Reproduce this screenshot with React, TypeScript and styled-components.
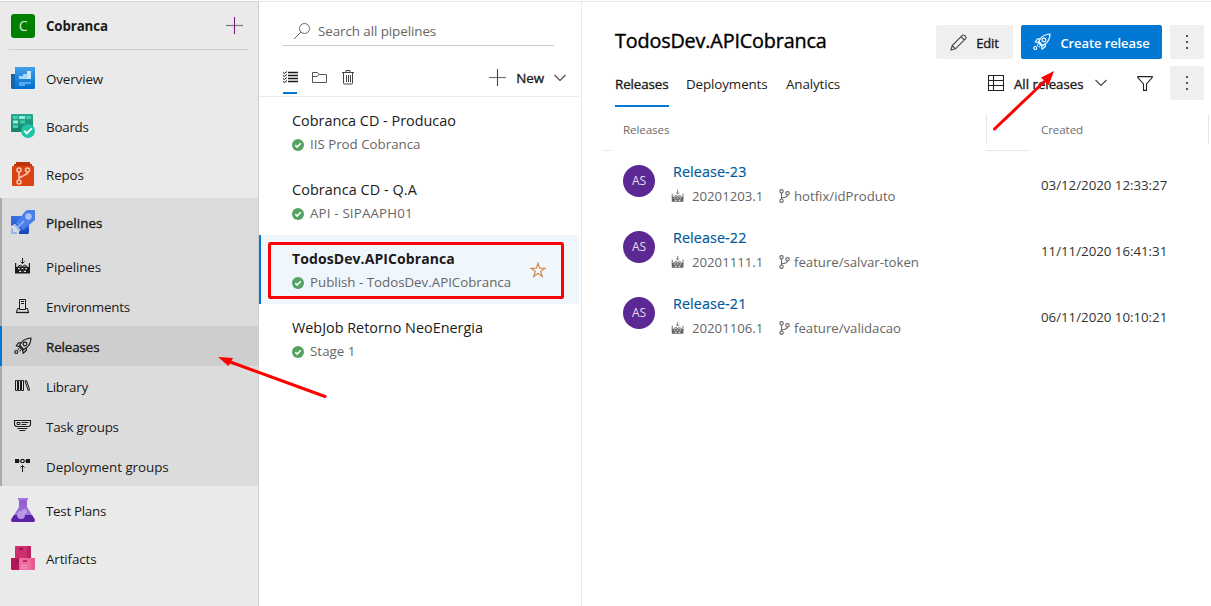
import React from "react";
import styled, { createGlobalStyle, css } from "styled-components";

const Global = createGlobalStyle`
  * { box-sizing: border-box; }
  body { margin: 0; background: #fff; overflow: hidden; }
  svg { display: block; flex: none; }
`;

const medium = css`-webkit-text-stroke: 0.35px currentColor;`;

const Page = styled.div`
  position: relative;
  display: flex;
  width: 1211px;
  height: 606px;
  padding-top: 1px;
  font-family: "Open Sans", "Noto Sans", sans-serif;
  font-size: 13.4px;
  letter-spacing: -0.1px;
  color: #1b1a19;
  white-space: nowrap;
`;

/* ---------- Sidebar ---------- */
const Sidebar = styled.nav`
  width: 259px;
  background: #eaeaea;
  border-top: 1px solid #d4d4d4;
  border-right: 1px solid #cfcfcf;
`;
const Project = styled.header`
  display: flex;
  align-items: center;
  height: 48px;
  margin: 0 10px 4px 9px;
  padding: 0 5px 0 2px;
  border-bottom: 1px solid #cdcdcd;
`;
const ProjectBadge = styled.span`
  width: 24px;
  height: 24px;
  margin-right: 11px;
  border-radius: 3px;
  background: #007f00;
  color: #d5ecd5;
  font-size: 14px;
  line-height: 24px;
  text-align: center;
`;
const ProjectName = styled.strong`
  flex: 1;
  font-size: 13.3px;
  line-height: 24px;
  letter-spacing: -0.12px;
`;
const NavItem = styled.a`
  display: flex;
  align-items: center;
  gap: 11px;
  height: 48px;
  padding-left: 11px;
`;
const NavLabel = styled.span<{ $strong?: boolean; $track?: number }>`
  padding-top: 1px;
  letter-spacing: ${(p) => p.$track ?? -0.12}px;
  ${(p) => p.$strong && medium}
`;
const NavSection = styled.div`
  background: #dcdcdc;
`;
const SectionHead = styled(NavItem)`
  padding-left: 9px;
  border-left: 2px solid #a9a9a9;
`;
const SubItem = styled.a<{ $active?: boolean }>`
  display: flex;
  align-items: center;
  gap: 14px;
  height: 40px;
  padding-left: 12px;
  border-left: 2px solid ${(p) => (p.$active ? "#0078d4" : "#a9a9a9")};
  background: ${(p) => (p.$active ? "#cecece" : "transparent")};
`;

/* ---------- Pipeline list ---------- */
const ListPane = styled.section`
  width: 323px;
  border-top: 1px solid #eaeaea;
  border-right: 1px solid #eaeaea;
`;
const Search = styled.div`
  display: flex;
  align-items: center;
  gap: 7px;
  width: 271px;
  height: 30px;
  margin: 14px 0 0 24px;
  padding-left: 10px;
  border-bottom: 1px solid #c8c8c8;
  color: #666;
  letter-spacing: -0.08px;
`;
const Toolbar = styled.div`
  display: flex;
  align-items: center;
  width: 320px;
  height: 51px;
  padding: 0 13px 0 24px;
  border-bottom: 1px solid #eaeaea;
`;
const ViewTab = styled.span<{ $active?: boolean }>`
  display: flex;
  align-items: center;
  height: 32px;
  width: ${(p) => (p.$active ? 14 : 15)}px;
  margin: 14px 15px 0 0;
  border-bottom: 2px solid ${(p) => (p.$active ? "#0078d4" : "transparent")};
`;
const NewButton = styled.span`
  display: flex;
  align-items: center;
  gap: 10px;
  margin: 13px 0 0 auto;
  ${medium}
`;
const PipelineRow = styled.div<{ $active?: boolean }>`
  display: flex;
  align-items: center;
  justify-content: space-between;
  width: 320px;
  height: 69px;
  padding: 0 33px 0 31px;
  border-left: 2px solid ${(p) => (p.$active ? "#0078d4" : "transparent")};
  background: ${(p) => (p.$active ? "#eff6fc" : "transparent")};
`;
const PipelineText = styled.div`
  padding-top: 2px;
`;
const PipelineName = styled.div<{ $active?: boolean; $track: number }>`
  font-size: ${(p) => (p.$active ? 14 : 14.4)}px;
  font-weight: ${(p) => (p.$active ? 700 : 400)};
  line-height: 24px;
  letter-spacing: ${(p) => p.$track}px;
`;
const StageLine = styled.div<{ $track: number }>`
  display: flex;
  align-items: center;
  gap: 6px;
  color: #666;
  font-size: 13.3px;
  line-height: 23px;
  letter-spacing: ${(p) => p.$track}px;
`;

/* ---------- Release panel ---------- */
const Main = styled.main`
  flex: 1;
  border-top: 1px solid #eaeaea;
`;
const TitleBar = styled.div`
  display: flex;
  align-items: center;
  height: 34px;
  margin: 23px 7px 0 33px;
  gap: 8px;
`;
const Title = styled.h1`
  flex: 1;
  margin: 0 0 2px;
  font-size: 19.8px;
  font-weight: 400;
  line-height: 28px;
  letter-spacing: -0.16px;
  color: #000;
  -webkit-text-stroke: 0.4px currentColor;
`;
const Button = styled.button<{ $primary?: boolean; $w: number }>`
  display: flex;
  align-items: center;
  justify-content: center;
  gap: 9px;
  width: ${(p) => p.$w}px;
  height: 34px;
  padding: 0;
  border: 0;
  border-radius: 2px;
  background: ${(p) => (p.$primary ? "#0078d4" : "#efefef")};
  color: ${(p) => (p.$primary ? "#fff" : "#1b1a19")};
  font: ${(p) => (p.$primary ? 600 : 400)} 13px "Open Sans", sans-serif;
  letter-spacing: ${(p) => (p.$primary ? -0.1 : -0.1)}px;
  ${(p) => !p.$primary && medium}
`;
const ButtonText = styled.span`
  padding-top: 2px;
`;
const TabBar = styled.div`
  display: flex;
  align-items: flex-start;
  height: 48px;
  margin: 7px 7px 0 33px;
`;
const Tab = styled.span<{ $active?: boolean; $w: number }>`
  width: ${(p) => p.$w}px;
  height: 41px;
  margin-right: 17px;
  line-height: 36px;
  letter-spacing: -0.12px;
  border-bottom: 2px solid ${(p) => (p.$active ? "#0078d4" : "transparent")};
  ${(p) => p.$active && medium}
`;
const TabTools = styled.div`
  display: flex;
  align-items: center;
  height: 34px;
  margin-left: auto;
`;
const FilterLabel = styled.span`
  width: 71px;
  margin: 2px 10px 0 10px;
  font-size: 13.2px;
  letter-spacing: 0.02px;
  ${medium}
`;
const FilterIcon = styled.span`
  margin: 0 17px 0 30px;
`;
const rule = "linear-gradient(#e6e6e6, #e6e6e6)";
const HeadRow = styled.div`
  display: flex;
  height: 37px;
  margin: 0 2px 0 21px;
  color: #6b6b6b;
  font-size: 11.6px;
  line-height: 32px;
`;
const ReleasesHead = styled.span`
  width: 383px;
  padding-left: 20px;
  background: ${rule} left bottom / 8px 1px no-repeat;
`;
const CreatedHead = styled.span`
  flex: 1;
  padding-left: 55px;
  background:
    ${rule} left top / 1px 30px no-repeat,
    ${rule} left bottom / 43px 1px no-repeat,
    ${rule} right top / 1px 30px no-repeat;
`;
const ReleaseRow = styled.div`
  display: grid;
  grid-template-columns: 32px 350px auto;
  column-gap: 18px;
  align-items: center;
  height: 66px;
  margin-left: 41px;
`;
const ReleaseList = styled.div`
  margin-top: -3px;
`;
const Avatar = styled.span`
  width: 32px;
  height: 32px;
  border-radius: 50%;
  background: #5c2893;
  color: #e7ddf0;
  font-size: 12px;
  line-height: 32px;
  text-align: center;
`;
const ReleaseName = styled.div`
  padding-top: 8px;
  color: #005a9e;
  font-size: 14.3px;
  line-height: 22px;
  letter-spacing: 0.12px;
  -webkit-text-stroke: 0.2px currentColor;
`;
const ReleaseMeta = styled.div`
  display: flex;
  align-items: center;
  height: 26px;
  margin-left: -2px;
  color: #666;
  font-size: 13.2px;
  letter-spacing: 0;
`;
const BuildNumber = styled.span`
  width: 87px;
  margin-left: 7px;
`;
const Branch = styled.span`
  margin-left: 4px;
  letter-spacing: -0.01px;
`;
const Created = styled.span`
  padding-top: 8px;
  color: #333;
  font-size: 13.3px;
  letter-spacing: -0.02px;
`;
const Annotations = styled.svg`
  position: absolute;
  inset: 0;
  pointer-events: none;
`;

/* ---------- Icons ---------- */
const OverviewIcon = () => (
  <svg width="24" height="24">
    <defs><linearGradient id="ov" x2="0" y2="1"><stop stopColor="#429fe8" /><stop offset="1" stopColor="#006fcd" /></linearGradient></defs>
    <path d="M0 8h5v15H1.500A1.500 1.500 0 0 1 0 21.500z" fill="#1565ae" />
    <path d="M4 1h20v20.500a1.500 1.500 0 0 1-1.500 1.500H3q1-.5 1-2z" fill="url(#ov)" />
    <path d="M8 10h4V8h4V5h4v8H8z" fill="#a9d6fa" /><path d="M16 5h4v8h-4z" fill="#c6e5fc" />
    <path d="M8 16h12v2H14v2H8z" fill="#55a9ec" />
  </svg>
);
const BoardsIcon = () => (
  <svg width="24" height="24">
    <defs><linearGradient id="bd" x2="0" y2="1"><stop stopColor="#2ba88f" /><stop offset="1" stopColor="#16806d" /></linearGradient></defs>
    <rect width="22" height="18" rx="1" fill="url(#bd)" />
    <path d="M2 2h5v3H2zM15 2h5v3h-5zM9 6.500h5v3H9zM2 11h5v3H2z" fill="#3fd0b0" />
    <path d="M8 2h6v3H8zM2 6.500h5v3H2z" fill="#92f3dc" />
    <circle cx="17" cy="17" r="7" fill="#1dc4a5" />
    <path d="m13.200 16.800 2.600 2.600 5-5" fill="none" stroke="#fff" strokeWidth="2" />
  </svg>
);
const ReposIcon = () => (
  <svg width="24" height="24">
    <path d="M5 0h14v2h2v3H3V2h2z" fill="#bd3508" />
    <rect x="1" y="4" width="22" height="20" rx="1" fill="#db4412" />
    <g fill="none" stroke="#f9c5ae" strokeWidth="1.600"><circle cx="8" cy="8" r="2" /><circle cx="16.500" cy="8" r="2" /><circle cx="8" cy="20" r="2" /><path d="M8 10v8M16.500 10v1.500L8 16" /></g>
  </svg>
);
const PipelinesIcon = () => (
  <svg width="24" height="24">
    <defs><linearGradient id="pp" x2="0" y2="1"><stop stopColor="#3b74e4" /><stop offset="1" stopColor="#1746b8" /></linearGradient></defs>
    <path d="M0 6h10l8 8v9l-1 1H8v-6l-4-4-4 2z" fill="url(#pp)" />
    <path d="M24 0v10L12 20l-7-7L14 1.500q1-1.500 3-1.500z" fill="#4b80ea" />
    <circle cx="17.500" cy="6.500" r="3.200" fill="#a9c4f8" />
    <path d="m13 11-6 6" stroke="#85a8f2" strokeWidth="1.800" />
    <path d="M0 18h2v4h4v2H0z" fill="#94b4f6" /><path d="m4 14 6 6-1.500 1.500-6-6z" fill="#a3bff8" />
  </svg>
);
const TestPlansIcon = () => (
  <svg width="24" height="24">
    <defs><linearGradient id="tp" x2="0" y2="1"><stop stopColor="#8f5bcf" /><stop offset="1" stopColor="#a57fdb" /></linearGradient></defs>
    <path d="M8 1h8v8l7.500 12q1 3-1.500 3H2q-2.500 0-1.500-3L8 9z" fill="url(#tp)" />
    <path d="M3 17h18l2.500 4q1 3-1.500 3H2q-2.500 0-1.500-3z" fill="#5c22a5" />
    <path d="M7 0h10v2H7z" fill="#a777df" />
    <circle cx="10" cy="17" r="4" fill="#b795e5" /><circle cx="13.500" cy="13.500" r="2.500" fill="#c3a5ec" opacity=".8" />
  </svg>
);
const ArtifactsIcon = () => (
  <svg width="24" height="24">
    <path d="M4 0h16v12H4z" fill="#cf2f6e" /><path d="M16 0h4v12h-4z" fill="#b82361" />
    <path d="M0 12h8v12H1l-1-1z" fill="#b3165a" /><path d="M8 12h16v11l-1 1H8z" fill="#ee6ba0" /><path d="M20 12h4v11l-1 1h-3z" fill="#e45a91" />
    <path d="M8 2h4v2H8zM4 14h4v2H4z" fill="#9b1450" /><path d="M12 14h4v2h-4z" fill="#c02767" /><path d="M10 19h6v1h-6zM10 21.500h6v1h-6z" fill="#f6a4c4" />
  </svg>
);
const BuildIcon = ({ size = 18, color = "#1b1a19" }) => (
  <svg width={size} height={size} viewBox="0 0 18 18">
    <g fill="none" stroke={color}><path d="M8.500 1v5.500M6.500 4.500l2 2 2-2" /><path d="M1.600 6v6M15.400 6v6" strokeWidth="1.200" /></g>
    <path fillRule="evenodd" fill={color} d="M1 10.500 4 9.500h9l3 1v6H1zM4 11v1.200h1.800V11zm3.600 0v1.200h1.800V11zm3.600 0v1.200H13V11zM5 13.800V15h2.300v-1.200zm4.700 0V15H12v-1.200z" />
    <path d="M4 9.500 6.300 8l2.200 1.500L10.800 8 13 9.500" fill="none" stroke={color} />
  </svg>
);
const EnvironmentIcon = () => (
  <svg width="18" height="18" fill="none" stroke="#1b1a19">
    <path d="M5.500 12.500v-10h6v10M3.500 11.500h2M11.500 11.500h2M3.500 11.500l-1 4h12l-1-4M5.500 12.500h6" /><path d="M7 4.500h3M7 6.500h3" /><path d="M2 15.500h13" strokeWidth="1.300" />
  </svg>
);
const RocketIcon = ({ color = "#1b1a19" }) => (
  <svg width="18" height="18" fill="none" stroke={color} strokeWidth="1.150" strokeLinejoin="round">
    <path d="M17 1C12.500 1.300 9.500 2.800 7.500 5.500L5 9.500l3.700 3.700 4-2.600C15.500 8.500 16.800 5.500 17 1z" />
    <circle cx="11" cy="7" r="1.900" />
    <path d="M7.300 5.800H4.500L2.200 9l3 .5M12.300 10.800v2.700l-3.200 2.700-.5-3" />
    <path d="m5.800 8.500 3.800 3.800M5 11.500l-1 1M6.700 13.200l-1 1" /><circle cx="2.300" cy="15" r="1.500" />
  </svg>
);
const LibraryIcon = () => (
  <svg width="18" height="18" fill="none" stroke="#1b1a19">
    <path d="M1.500 3.500h2v10h-2zM4.500 3.500h2v10h-2zM7.500 3.500h2v10h-2z" /><path d="m11 4 1.500-.5 3.200 9.500-1.500.5z" />
  </svg>
);
const TaskIcon = () => (
  <svg width="18" height="18" fill="none" stroke="#1b1a19">
    <path d="M.5 3.500h16v4.500l-1.500 1.500H2L.5 8z" strokeWidth="1.100" /><path d="M3 5.500h3v2H3zM7.500 5.500h7M7.500 7.500h5" /><path d="M3.500 11.500h10M5.500 13.500h6" strokeWidth="1.200" />
  </svg>
);
const DeployIcon = () => (
  <svg width="18" height="18">
    <path d="M1 2h4v4H1zM12 2h4v4h-4z" fill="#1b1a19" /><path d="M5 4h2M10 4h2M7 2.500h3v3H7zM8.500 8.500V15M6.500 10.500l2-2 2 2" fill="none" stroke="#1b1a19" />
  </svg>
);
const PlusIcon = ({ v = "#444", h = "#777" }) => (
  <svg width="17" height="17"><path d="M0 8.500h17" stroke={h} strokeWidth="1.200" /><path d="M8.500 0v17" stroke={v} strokeWidth="1.100" /></svg>
);
const SearchIcon = () => (
  <svg width="18" height="18" fill="none" stroke="#666"><circle cx="11.500" cy="6.500" r="5" /><path d="M8 10 1 17" /></svg>
);
const ListIcon = () => (
  <svg width="15" height="12" stroke="#1b1a19">
    <path d="M5 1.500h10M5 4.500h10M5 7.500h10M5 10.500h10" strokeWidth="1.400" /><path d="m0 1.500 1.300 1L4 .5M0 4.500l1.300 1L4 3.500M0 7.500l1.300 1L4 6.500M0 10.500l1.300 1L4 9.500" fill="none" />
  </svg>
);
const FolderIcon = () => (
  <svg width="15" height="12" fill="none" stroke="#555"><path d="M.5 11.500V1.500h5l1.500 2h7.500v8zM.5 5.500H5l2-2" /></svg>
);
const TrashIcon = () => (
  <svg width="13" height="15" fill="none" stroke="#444"><path d="M0 2.500h12M4 2.500v-2h4v2M1.500 2.500v10.500q0 1 1 1h7q1 0 1-1V2.500M4.500 5v7M6.500 5v7M8.500 5v7" /></svg>
);
const ChevronIcon = () => (
  <svg width="12" height="8" fill="none" stroke="#444" strokeWidth="1.100"><path d="m.5 1 5.500 5.500L11.500 1" /></svg>
);
const CheckIcon = () => (
  <svg width="12" height="12"><circle cx="6" cy="6" r="6" fill="#55a362" /><path d="m3.300 6.100 1.900 1.900 3.500-3.700" fill="none" stroke="#fff" strokeWidth="1.600" /></svg>
);
const StarIcon = () => (
  <svg width="16" height="16" fill="none" stroke="#d67f3c" strokeWidth="1.100"><path d="m8 1.200 1.700 5h5.300l-4.300 3.200 1.600 5.100L8 11.400l-4.300 3.100 1.600-5.100L1 6.200h5.300z" /></svg>
);
const PencilIcon = () => (
  <svg width="17" height="17" fill="none" stroke="#444" strokeWidth="1.100"><path d="M1 16l1.200-4.500L12.300 1.400q1-.9 2.200 0l1.100 1.100q.9 1.200 0 2.200L5.500 14.800zM2.200 11.500l3.300 3.300M11 2.700 14.300 6" /></svg>
);
const MoreIcon = () => (
  <svg width="2" height="14" fill="#555"><path d="M0 0h2v2H0zM0 6h2v2H0zM0 12h2v2H0z" /></svg>
);
const TableIcon = () => (
  <svg width="16" height="16" fill="none" stroke="#222" strokeWidth="1.100"><path d="M.5.500h15v15H.5zM.5 5.500h15M.5 10.500h15M5.500.500v15" /></svg>
);
const FunnelIcon = () => (
  <svg width="16" height="15" fill="none" stroke="#222" strokeWidth="1.100"><path d="M.8.600h14.400v1L9.500 8v6.400h-3V8L.8 1.600z" /></svg>
);
const BranchIcon = () => (
  <svg width="11" height="14" fill="none" stroke="#666" strokeWidth="1.100"><circle cx="2.500" cy="2.300" r="1.700" /><circle cx="2.500" cy="11.700" r="1.700" /><circle cx="8.500" cy="4.300" r="1.700" /><path d="M2.500 4v6M8.500 6q0 2.500-6 2.700" /></svg>
);

const pipelines = [
  { name: "Cobranca CD - Producao", stage: "IIS Prod Cobranca", nt: 0, st: 0 },
  { name: "Cobranca CD - Q.A", stage: "API - SIPAAPH01", nt: 0.08, st: 0.18 },
  { name: "TodosDev.APICobranca", stage: "Publish - TodosDev.APICobranca", nt: 0.09, st: 0, active: true },
  { name: "WebJob Retorno NeoEnergia", stage: "Stage 1", nt: 0, st: 0.05 },
];
const releases = [
  { name: "Release-23", build: "20201203.1", branch: "hotfix/idProduto", created: "03/12/2020 12:33:27" },
  { name: "Release-22", build: "20201111.1", branch: "feature/salvar-token", created: "11/11/2020 16:41:31" },
  { name: "Release-21", build: "20201106.1", branch: "feature/validacao", created: "06/11/2020 10:10:21" },
];

export default function App() {
  return (
    <>
      <Global />
      <Page>
        <Sidebar>
          <Project>
            <ProjectBadge>C</ProjectBadge>
            <ProjectName>Cobranca</ProjectName>
            <PlusIcon v="#7b1f7e" h="#7d767e" />
          </Project>
          <NavItem><OverviewIcon /><NavLabel>Overview</NavLabel></NavItem>
          <NavItem><BoardsIcon /><NavLabel $track={-0.25}>Boards</NavLabel></NavItem>
          <NavItem><ReposIcon /><NavLabel>Repos</NavLabel></NavItem>
          <NavSection>
            <SectionHead><PipelinesIcon /><NavLabel $strong $track={0.05}>Pipelines</NavLabel></SectionHead>
            <SubItem><BuildIcon /><NavLabel>Pipelines</NavLabel></SubItem>
            <SubItem><EnvironmentIcon /><NavLabel $track={-0.23}>Environments</NavLabel></SubItem>
            <SubItem $active><RocketIcon /><NavLabel $strong>Releases</NavLabel></SubItem>
            <SubItem><LibraryIcon /><NavLabel $track={-0.25}>Library</NavLabel></SubItem>
            <SubItem><TaskIcon /><NavLabel $track={-0.23}>Task groups</NavLabel></SubItem>
            <SubItem><DeployIcon /><NavLabel $track={-0.05}>Deployment groups</NavLabel></SubItem>
          </NavSection>
          <NavItem><TestPlansIcon /><NavLabel $track={-0.3}>Test Plans</NavLabel></NavItem>
          <NavItem><ArtifactsIcon /><NavLabel>Artifacts</NavLabel></NavItem>
        </Sidebar>

        <ListPane>
          <Search><SearchIcon />Search all pipelines</Search>
          <Toolbar>
            <ViewTab $active><ListIcon /></ViewTab>
            <ViewTab><FolderIcon /></ViewTab>
            <ViewTab><TrashIcon /></ViewTab>
            <NewButton><PlusIcon />New<ChevronIcon /></NewButton>
          </Toolbar>
          {pipelines.map((p) => (
            <PipelineRow key={p.name} $active={p.active}>
              <PipelineText>
                <PipelineName $active={p.active} $track={p.nt}>{p.name}</PipelineName>
                <StageLine $track={p.st}><CheckIcon />{p.stage}</StageLine>
              </PipelineText>
              {p.active && <StarIcon />}
            </PipelineRow>
          ))}
        </ListPane>

        <Main>
          <TitleBar>
            <Title>TodosDev.APICobranca</Title>
            <Button $w={77}><PencilIcon /><ButtonText>Edit</ButtonText></Button>
            <Button $w={141} $primary><RocketIcon color="#fff" /><ButtonText>Create release</ButtonText></Button>
            <Button $w={34}><MoreIcon /></Button>
          </TitleBar>
          <TabBar>
            <Tab $w={54} $active>Releases</Tab>
            <Tab $w={83}>Deployments</Tab>
            <Tab $w={56}>Analytics</Tab>
            <TabTools>
              <TableIcon />
              <FilterLabel>All releases</FilterLabel>
              <ChevronIcon />
              <FilterIcon><FunnelIcon /></FilterIcon>
              <Button $w={34}><MoreIcon /></Button>
            </TabTools>
          </TabBar>
          <HeadRow>
            <ReleasesHead>Releases</ReleasesHead>
            <CreatedHead>Created</CreatedHead>
          </HeadRow>
          <ReleaseList>
            {releases.map((r) => (
              <ReleaseRow key={r.name}>
                <Avatar>AS</Avatar>
                <div>
                  <ReleaseName>{r.name}</ReleaseName>
                  <ReleaseMeta>
                    <BuildIcon size={14} color="#666" />
                    <BuildNumber>{r.build}</BuildNumber>
                    <BranchIcon />
                    <Branch>{r.branch}</Branch>
                  </ReleaseMeta>
                </div>
                <Created>{r.created}</Created>
              </ReleaseRow>
            ))}
          </ReleaseList>
        </Main>

        <Annotations width="1211" height="606" fill="none" stroke="#fe0000" strokeWidth="3">
          <rect x="269.500" y="243.500" width="293" height="54" rx="1" />
          <path d="M325 396.500 229 361.500M994.500 129 1046 80" strokeLinecap="round" />
          <path d="m218 357 15 1-4.500 8zM1054 71l-13 6.500 7.700 7.800z" fill="#fe0000" stroke="none" />
        </Annotations>
      </Page>
    </>
  );
}
